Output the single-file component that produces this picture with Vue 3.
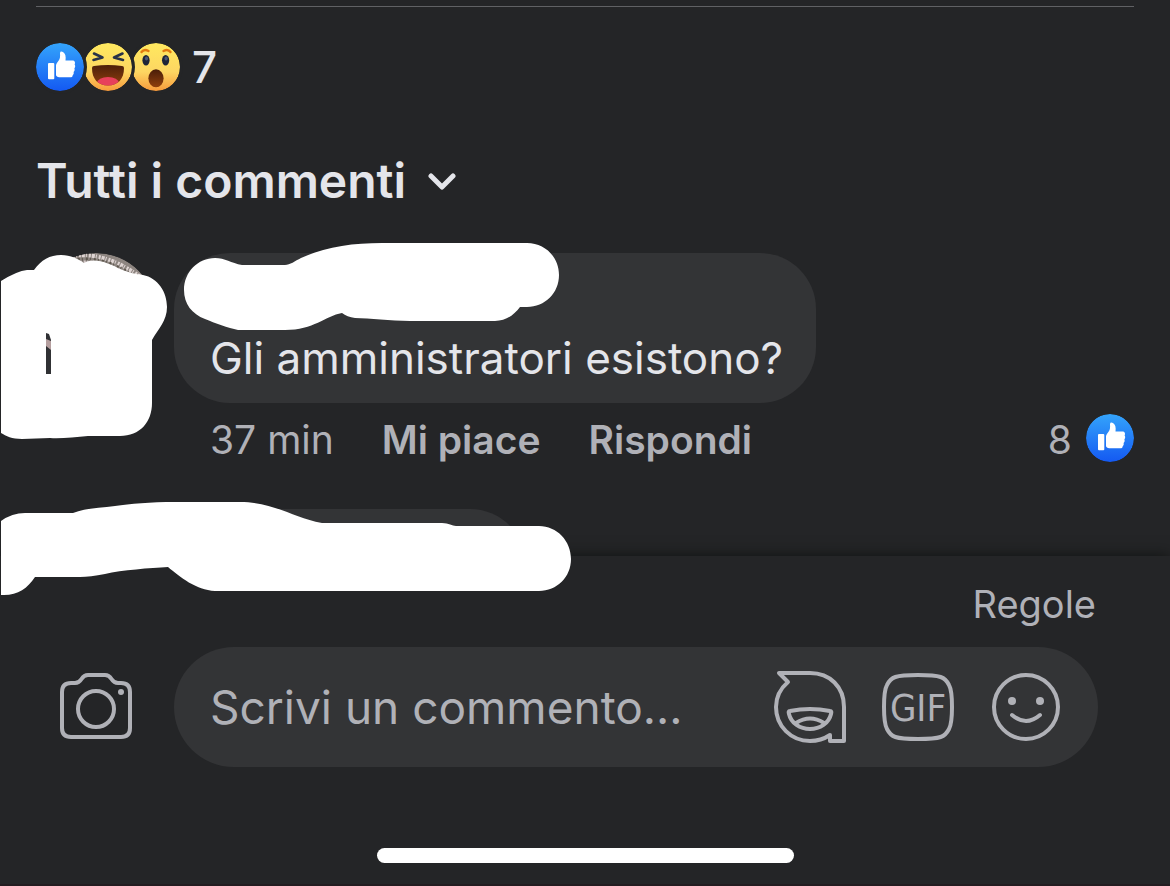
<script setup>
import { ref } from 'vue'

const draft = ref('')

const reactions = [
  { id: 'like', label: 'Mi piace' },
  { id: 'haha', label: 'Ahah' },
  { id: 'wow',  label: 'Wow' }
]
</script>

<template>
  <div class="screen">
    <svg class="defs" aria-hidden="true">
      <defs>
        <linearGradient id="blue" x1="0" y1="0" x2="0" y2="1">
          <stop offset="0" stop-color="#34a4fb" />
          <stop offset="1" stop-color="#1459f2" />
        </linearGradient>
        <linearGradient id="yellow" x1="0" y1="0" x2="0" y2="1">
          <stop offset="0" stop-color="#ffe95f" />
          <stop offset="0.6" stop-color="#fdd662" />
          <stop offset="1" stop-color="#f79a3c" />
        </linearGradient>
        <linearGradient id="mouth" x1="0" y1="0" x2="0" y2="1">
          <stop offset="0" stop-color="#4a1e09" />
          <stop offset="1" stop-color="#8f3f0d" />
        </linearGradient>
        <clipPath id="laugh">
          <path d="M8 25Q8 23 10 23Q24 21 38 23Q40 23 40 25C40 36 34 42.500 24 42.500S8 36 8 25Z" />
        </clipPath>
        <symbol id="r-like" viewBox="0 0 48 48">
          <circle cx="24" cy="24" r="24" fill="url(#blue)" />
          <rect x="12" y="20" width="6.300" height="16.300" rx="1" fill="#fff" />
          <path fill="#fff" d="M20 22.500C20 21 21 20 22 18.500C24 16 24.300 14 24 10.500C24 8 25.500 8 27 9C29.500 10.500 30 13.500 29.500 17.500H36.500C39 17.500 39.500 20 38.600 21.500C39.600 23 39.200 24.500 38.400 25.300C39 27 38.500 28.300 37.600 29C38 30.500 37.500 31.500 36.700 32.200C36.700 34 35.500 34.300 34 34.300H25C22 34.300 20 33.500 20 32Z" />
        </symbol>
        <symbol id="r-haha" viewBox="0 0 48 48">
          <circle cx="24" cy="24" r="24" fill="url(#yellow)" />
          <path d="M10 10.500L18.500 14.500L9.500 17M38.500 10.500L30 14.500L39 17" fill="none" stroke="#293247" stroke-width="2.600" stroke-linecap="round" stroke-linejoin="round" />
          <g clip-path="url(#laugh)">
            <rect x="8" y="21" width="32" height="22" fill="url(#mouth)" />
            <ellipse cx="24" cy="40" rx="11" ry="6" fill="#e7405b" />
          </g>
        </symbol>
        <symbol id="r-wow" viewBox="0 0 48 48">
          <circle cx="24" cy="24" r="24" fill="url(#yellow)" />
          <path d="M9.500 9Q12 5.500 16.500 8M31.500 8Q36 5.500 38.500 9" fill="none" stroke="#e2790f" stroke-width="2.400" stroke-linecap="round" />
          <ellipse cx="14" cy="17.300" rx="3.600" ry="5.200" fill="#1e2438" />
          <ellipse cx="33.600" cy="17.300" rx="3.600" ry="5.200" fill="#1e2438" />
          <ellipse cx="14.500" cy="15.500" rx="1.600" ry="2" fill="#4a5775" />
          <ellipse cx="34.100" cy="15.500" rx="1.600" ry="2" fill="#4a5775" />
          <ellipse cx="24" cy="35.300" rx="7.600" ry="9" fill="url(#mouth)" />
        </symbol>
      </defs>
    </svg>

    <main class="post">
      <div class="reactions">
        <svg v-for="r in reactions" :key="r.id" class="reaction" role="img" :aria-label="r.label">
          <use :href="'#r-' + r.id" />
        </svg>
        <span class="reaction-count">7</span>
      </div>

      <button class="filter" type="button">
        Tutti i commenti
        <svg class="chevron" viewBox="0 0 28 20" aria-hidden="true">
          <path d="M3 5L14 16L25 5" />
        </svg>
      </button>

      <article class="comment">
        <div class="avatar">
          <svg viewBox="0 0 120 120" aria-hidden="true">
            <circle cx="60" cy="60" r="60" fill="#8d8580" />
            <path d="M30 4Q70 -5 112 30" fill="none" stroke="#ded4d2" stroke-width="4" stroke-dasharray="1 2 2 1 3 1" />
            <path d="M34 8Q70 -1 110 32" fill="none" stroke="#5d564d" stroke-width="3" stroke-dasharray="2 2 1 3" />
            <path d="M36 11Q70 2 108 33" fill="none" stroke="#d5c9c9" stroke-width="3" stroke-dasharray="2 1 1 2" />
          </svg>
        </div>
        <div class="comment-main">
          <div class="bubble">
            <p class="comment-text">Gli amministratori esistono?</p>
          </div>
          <div class="actions">
            <span class="time">37 min</span>
            <button type="button">Mi piace</button>
            <button type="button">Rispondi</button>
            <span class="like-count">8</span>
            <svg class="reaction" role="img" aria-label="Mi piace"><use href="#r-like" /></svg>
          </div>
        </div>
        <svg class="scribble scribble-first" viewBox="0 240 600 210" aria-hidden="true">
          <path d="M1 281Q17 271 27 270L34 270C41 260 50 255 61 255C71 255 78 259 84 263C95 257 108 263 120 269Q132 274 143 275C158 278 167 292 167 307C167 321 158 329 152 340V403C152 422 140 436 120 436H88C75 437 60 439 50 438L22 439C12 439 6 436 1 433Z" />
          <path d="M184 290C184 272 198 258 215 258C225 258 231 263 242 265H285C290 265 295 261 301 258C325 247 352 243 382 243H527C545 243 559 257 559 275S545 307 527 307H520C514 315 506 321 495 321H410C390 321 370 318 355 318Q347 317 342 313C325 316 314 330 285 330H238C228 328 215 323 205 319C192 314 184 304 184 290Z" />
          <path class="sliver" d="M46 333L49 334L51 340V374H46Z" />
          <path class="sliver-skin" d="M46 339L51 341V350L46 346Z" />
        </svg>
      </article>

      <article class="comment comment-next">
        <div class="bubble bubble-next"></div>
        <svg class="scribble scribble-next" viewBox="0 500 600 100" aria-hidden="true">
          <path d="M1 521Q12 513 25 513H73C85 508 100 508 115 506C130 504 150 502 175 502H240C275 502 293 518 322 523H442C449 523 452 526 456 526H539C557 526 571 541 571 559S557 591 539 591H215C196 590 180 577 168 567C150 568 122 570 105 574Q90 577 80 577H35C27 589 17 596 1 595Z" />
        </svg>
      </article>
    </main>

    <footer class="composer">
      <a class="rules" href="#">Regole</a>
      <form class="composer-row" @submit.prevent>
        <button class="icon-btn" type="button" aria-label="Fotocamera">
          <svg viewBox="0 0 72 72">
            <path d="M11 12H15C23 12 20 4 28 4H45C53 4 50 12 58 12H61Q70 12 70 21V57Q70 66 61 66H11Q2 66 2 57V21Q2 12 11 12Z" />
            <circle cx="36" cy="38" r="18" />
            <circle class="dot" cx="61" cy="21" r="3" />
          </svg>
        </button>
        <div class="field">
          <input v-model="draft" type="text" placeholder="Scrivi un commento..." aria-label="Scrivi un commento" />
          <button class="icon-btn" type="button" aria-label="Adesivi">
            <svg viewBox="0 0 72 72">
              <path d="M5 2H36C56 2 70 16 70 36V70H56V64C50 68 44 70 36 70C17 70 2 55 2 36C2 26 7 17 14 11Z" />
              <path d="M16 40Q36 36 56 40Q58 40 57 43C55 52 46 58 36 58S17 52 15 43Q14 40 16 40ZM22 52Q36 43 50 52" />
            </svg>
          </button>
          <button class="icon-btn" type="button" aria-label="GIF">
            <svg viewBox="0 0 72 72">
              <path d="M36 4C59 4 63 6 67 14C71 21 71 51 67 58C63 66 59 68 36 68S9 66 5 58C1 51 1 21 5 14C9 6 13 4 36 4Z" />
              <text x="36" y="50" text-anchor="middle">GIF</text>
            </svg>
          </button>
          <button class="icon-btn" type="button" aria-label="Emoji">
            <svg viewBox="0 0 72 72">
              <circle cx="36" cy="36" r="32" />
              <circle class="dot" cx="22" cy="30" r="4" />
              <circle class="dot" cx="50" cy="30" r="4" />
              <path d="M22 44Q36 56 50 44" />
            </svg>
          </button>
        </div>
      </form>
      <div class="home-bar"></div>
    </footer>
  </div>
</template>

<style>
body {
  margin: 0;
  background: #242527;
}
</style>

<style scoped>
.screen {
  display: flex;
  flex-direction: column;
  min-height: 100vh;
  box-sizing: border-box;
  background: #242527;
  border-bottom: 2px solid #231c20;
  color: #e4e5ea;
  font-family: Inter, "Liberation Sans", sans-serif;
  overflow: hidden;
}
.defs { position: absolute; width: 0; height: 0; }

button {
  padding: 0;
  border: 0;
  background: none;
  color: inherit;
  font: inherit;
  cursor: pointer;
}

.post {
  flex: 1;
  display: flex;
  flex-direction: column;
  padding: 6px 36px 0;
}
.reactions {
  display: flex;
  align-items: center;
  padding-top: 36px;
  border-top: 1px solid #606164;
}
.reaction {
  width: 48px;
  height: 48px;
  flex: none;
  border-radius: 50%;
}
.reactions .reaction { position: relative; box-shadow: 0 0 0 3px #242527; }
.reactions .reaction:nth-child(1) { z-index: 3; }
.reactions .reaction:nth-child(2) { z-index: 2; }
.reaction-count {
  margin-left: 12px;
  font-size: 44px;
  font-weight: 500;
  line-height: 48px;
}

.filter {
  display: flex;
  align-items: center;
  align-self: flex-start;
  gap: 22px;
  margin: 60px 0 42px;
  font-size: 48px;
  font-weight: 600;
  line-height: 60px;
}
.chevron {
  width: 28px;
  height: 20px;
  fill: none;
  stroke: currentColor;
  stroke-width: 5;
  stroke-linecap: round;
  stroke-linejoin: round;
}

.comment {
  position: relative;
  display: flex;
  gap: 18px;
}
.avatar { flex: none; width: 120px; height: 120px; border-radius: 50%; overflow: hidden; }
.avatar svg { display: block; }
.comment-main { flex: 1; }
.bubble {
  width: fit-content;
  padding: 78px 33px 18px 36px;
  border-radius: 56px;
  background: #333436;
}
.comment-text { margin: 0; font-size: 44px; line-height: 54px; }
.actions {
  display: flex;
  align-items: flex-start;
  margin-top: 11px;
  padding-left: 36px;
  color: #b0b1b7;
  font-size: 39px;
  line-height: 52px;
}
.actions button { margin-left: 48px; font-weight: 600; }
.like-count { margin-left: auto; padding-right: 14px; }

.comment-next { height: 47px; margin-top: 43px; }
.bubble-next {
  width: 352px;
  height: 150px;
  box-sizing: border-box;
  margin-left: 138px;
}
.scribble {
  position: absolute;
  left: -36px;
  z-index: 5;
  width: 600px;
  fill: #fff;
  pointer-events: none;
}
.scribble-first { top: -13px; height: 210px; }
.scribble-next { top: -9px; height: 100px; }
.sliver { fill: #303134; }
.sliver-skin { fill: #b59f9f; }

.composer {
  position: relative;
  z-index: 1;
  display: flex;
  flex-direction: column;
  padding: 24px 72px 21px 60px;
  background: #242527;
  box-shadow: 0 0 14px #101211;
}
.rules {
  align-self: flex-end;
  padding-right: 2px;
  color: #b0b1b7;
  font-size: 38px;
  line-height: 48px;
  text-decoration: none;
}
.composer-row {
  display: flex;
  align-items: center;
  gap: 42px;
  margin-top: 19px;
  color: #b0b1b7;
}
.field {
  flex: 1;
  min-width: 0;
  display: flex;
  align-items: center;
  gap: 36px;
  height: 120px;
  box-sizing: border-box;
  padding: 0 36px;
  border-radius: 60px;
  background: #333436;
}
.field input {
  flex: 1;
  min-width: 0;
  padding: 0;
  border: 0;
  outline: 0;
  background: none;
  color: #e4e5ea;
  font: 46px/60px Inter, "Liberation Sans", sans-serif;
}
.field input::placeholder { color: #b0b1b7; opacity: 1; }
.icon-btn { flex: none; width: 72px; height: 72px; }
.icon-btn svg {
  display: block;
  fill: none;
  stroke: currentColor;
  stroke-width: 4;
  stroke-linecap: round;
  stroke-linejoin: round;
}
.icon-btn .dot { fill: currentColor; stroke: none; }
.icon-btn text {
  fill: currentColor;
  stroke: none;
  font: 38px "DejaVu Sans Condensed", "Open Sans", sans-serif;
}
.home-bar {
  align-self: center;
  width: 417px;
  height: 15px;
  margin: 81px 0 0 12px;
  border-radius: 8px;
  background: #fff;
}
</style>
